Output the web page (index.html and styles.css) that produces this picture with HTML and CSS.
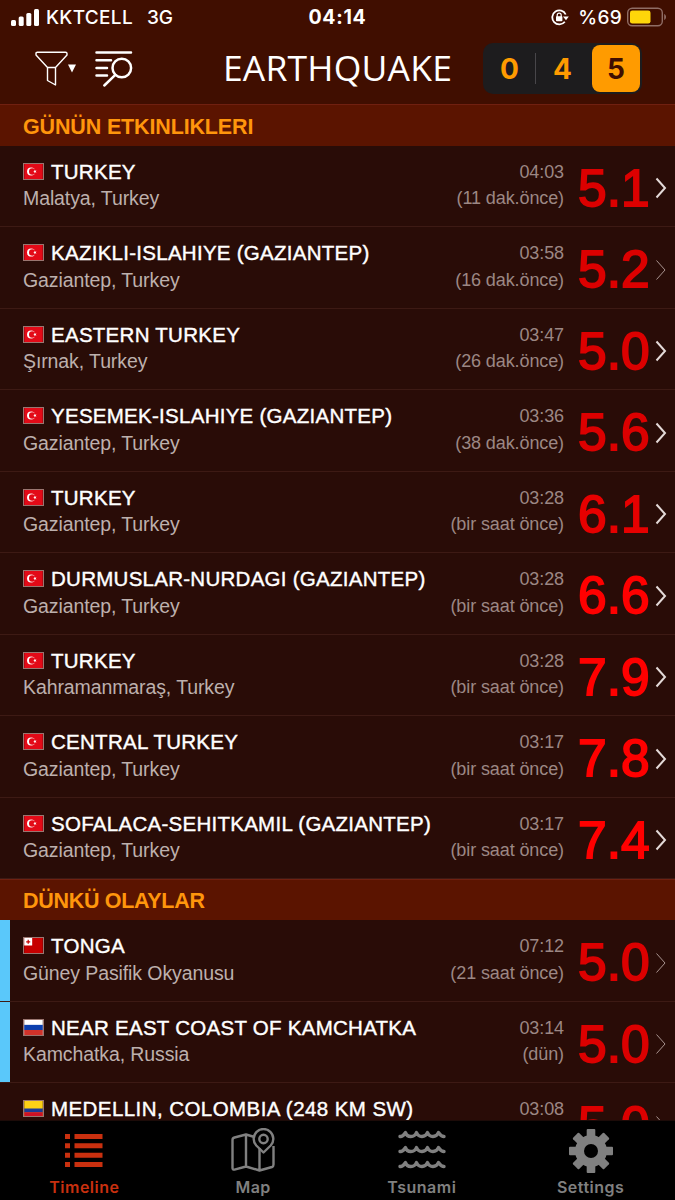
FILE: index.html
```html
<!DOCTYPE html>
<html lang="tr">
<head>
    <meta charset="UTF-8">
    <meta name="viewport" content="width=device-width, initial-scale=1.0">
    <title>Earthquake</title>

    <link rel="stylesheet" href="styles.css">
</head>
<body>

    <!-- Shared icons -->
    <svg class="symbols">
        <symbol id="flag-tr" viewBox="0 0 21 17">
            <rect width="21" height="17" fill="#e30a17"/>
            <circle cx="7.8" cy="8.5" r="4.6" fill="#fff"/>
            <circle cx="9.1" cy="8.5" r="3.7" fill="#e30a17"/>
            <path d="M10.2 8.5l1.3-.6.1-1.4.9 1.1 1.3-.4-.7 1.3.7 1.3-1.3-.4-.9 1.1-.1-1.4z" fill="#fff"/>
        </symbol>
        <symbol id="flag-to" viewBox="0 0 21 17">
            <rect width="21" height="17" fill="#c60000"/>
            <rect width="9" height="8.5" fill="#fff"/>
            <path d="M4.5 2v4.5M2.2 4.3h4.6" stroke="#c60000" stroke-width="1.4"/>
        </symbol>
        <symbol id="flag-ru" viewBox="0 0 21 17">
            <rect width="21" height="17" fill="#fff"/>
            <rect y="5.5" width="21" height="6" fill="#0b3fae"/>
            <rect y="11.3" width="21" height="5.7" fill="#d2322a"/>
        </symbol>
        <symbol id="flag-co" viewBox="0 0 21 17">
            <rect width="21" height="17" fill="#fcd116"/>
            <rect y="8.5" width="21" height="4.5" fill="#1c3a96"/>
            <rect y="12.7" width="21" height="4.3" fill="#ce1126"/>
        </symbol>
        <symbol id="chevron" viewBox="0 0 12 22">
            <path d="M1.5 1.5L10 11L1.5 20.5" fill="none" stroke="currentColor"/>
        </symbol>
        <symbol id="wave" viewBox="0 0 48 12">
            <path d="M2 8.5C5 9 6 6.5 7.5 4.5C9 9.8 16.5 9.8 18.5 4.5C20.5 9.8 27.5 9.8 29.5 4.5C31.5 9.8 38.5 9.8 40.5 4.5C42 6.5 43 8.5 46 8.5"/>
        </symbol>
    </svg>

    <div class="status-bar">
        <div class="carrier">
            <svg class="signal" width="28" height="17" viewBox="0 0 28 17">
                <rect x="0" y="11" width="5" height="6" rx="1.5"/>
                <rect x="7.7" y="7.5" width="5" height="9.5" rx="1.5"/>
                <rect x="15.3" y="4" width="5" height="13" rx="1.5"/>
                <rect x="23" y="0" width="5" height="17" rx="1.5"/>
            </svg>
            <span class="operator">KKTCELL</span>
            <span>3G</span>
        </div>
        <div class="clock">04:14</div>
        <div class="battery">
            <svg width="18" height="17" viewBox="0 0 18 17">
                <path d="M14.7 5.5A7 7 0 1 0 13.8 12.7" fill="none" stroke="#fff" stroke-width="1.8"/>
                <path d="M12 7.5h5.8L15 11.2z" fill="#fff"/>
                <rect x="5" y="7.3" width="6.4" height="5" rx=".8" fill="#fff"/>
                <path d="M6.2 8V6.2a2 2 0 0 1 4 0V8" fill="none" stroke="#fff" stroke-width="1.2"/>
            </svg>
            <span class="percent">%69</span>
            <svg width="40" height="20" viewBox="0 0 40 20">
                <rect x=".7" y="1.2" width="34.6" height="17.6" rx="4.5" fill="none" stroke="#8f6d65" stroke-width="1.4"/>
                <rect x="3" y="3.5" width="20.5" height="13" rx="2.3" fill="#fed60a"/>
                <path d="M37.2 7c2.4 1 2.4 5 0 6z" fill="#8f6d65"/>
            </svg>
        </div>
    </div>

    <div class="nav-bar">
        <div class="tools">
            <svg width="42" height="36" viewBox="0 0 42 36" fill="none" stroke="#fff" stroke-width="1.4" stroke-linejoin="round">
                <path d="M1 2.5Q1 1.3 2.3 1.3H30.5Q32 1.3 32 2.5V4L20.5 16.5H12.5L1 4zM12.5 16.5V29.5L20.5 34V16.5"/>
                <path d="M33 13.5h8L37 21.5z" fill="#fff" stroke="none"/>
            </svg>
            <svg width="38" height="38" viewBox="0 0 38 38" fill="none" stroke="#fff" stroke-width="2.5" stroke-linecap="round">
                <path d="M1.5 2.5H36M1.5 10.3H16M1.5 18H12M1.5 25.5H12"/>
                <circle cx="26.8" cy="18" r="9.3"/>
                <path d="M20.3 24.8L9.3 35.5"/>
            </svg>
        </div>
        <h1>EARTHQUAKE</h1>
        <div class="segments">
            <span>0</span>
            <span>4</span>
            <span class="active">5</span>
        </div>
    </div>

    <div class="list">
        <h2>GÜNÜN ETKINLIKLERI</h2>

        <div class="row">
            <div class="place">
                <div class="name"><svg class="flag"><use href="#flag-tr"/></svg>TURKEY</div>
                <div class="region">Malatya, Turkey</div>
            </div>
            <div class="time">04:03<br>(11 dak.önce)</div>
            <div class="mag">5.1</div>
            <svg class="chevron"><use href="#chevron"/></svg>
        </div>
        <div class="row">
            <div class="place">
                <div class="name"><svg class="flag"><use href="#flag-tr"/></svg>KAZIKLI-ISLAHIYE (GAZIANTEP)</div>
                <div class="region">Gaziantep, Turkey</div>
            </div>
            <div class="time">03:58<br>(16 dak.önce)</div>
            <div class="mag">5.2</div>
            <svg class="chevron thin"><use href="#chevron"/></svg>
        </div>
        <div class="row">
            <div class="place">
                <div class="name"><svg class="flag"><use href="#flag-tr"/></svg>EASTERN TURKEY</div>
                <div class="region">Şırnak, Turkey</div>
            </div>
            <div class="time">03:47<br>(26 dak.önce)</div>
            <div class="mag">5.0</div>
            <svg class="chevron"><use href="#chevron"/></svg>
        </div>
        <div class="row">
            <div class="place">
                <div class="name"><svg class="flag"><use href="#flag-tr"/></svg>YESEMEK-ISLAHIYE (GAZIANTEP)</div>
                <div class="region">Gaziantep, Turkey</div>
            </div>
            <div class="time">03:36<br>(38 dak.önce)</div>
            <div class="mag">5.6</div>
            <svg class="chevron"><use href="#chevron"/></svg>
        </div>
        <div class="row">
            <div class="place">
                <div class="name"><svg class="flag"><use href="#flag-tr"/></svg>TURKEY</div>
                <div class="region">Gaziantep, Turkey</div>
            </div>
            <div class="time">03:28<br>(bir saat önce)</div>
            <div class="mag strong">6.1</div>
            <svg class="chevron"><use href="#chevron"/></svg>
        </div>
        <div class="row">
            <div class="place">
                <div class="name"><svg class="flag"><use href="#flag-tr"/></svg>DURMUSLAR-NURDAGI (GAZIANTEP)</div>
                <div class="region">Gaziantep, Turkey</div>
            </div>
            <div class="time">03:28<br>(bir saat önce)</div>
            <div class="mag major">6.6</div>
            <svg class="chevron"><use href="#chevron"/></svg>
        </div>
        <div class="row">
            <div class="place">
                <div class="name"><svg class="flag"><use href="#flag-tr"/></svg>TURKEY</div>
                <div class="region">Kahramanmaraş, Turkey</div>
            </div>
            <div class="time">03:28<br>(bir saat önce)</div>
            <div class="mag major">7.9</div>
            <svg class="chevron"><use href="#chevron"/></svg>
        </div>
        <div class="row">
            <div class="place">
                <div class="name"><svg class="flag"><use href="#flag-tr"/></svg>CENTRAL TURKEY</div>
                <div class="region">Gaziantep, Turkey</div>
            </div>
            <div class="time">03:17<br>(bir saat önce)</div>
            <div class="mag major">7.8</div>
            <svg class="chevron"><use href="#chevron"/></svg>
        </div>
        <div class="row">
            <div class="place">
                <div class="name"><svg class="flag"><use href="#flag-tr"/></svg>SOFALACA-SEHITKAMIL (GAZIANTEP)</div>
                <div class="region">Gaziantep, Turkey</div>
            </div>
            <div class="time">03:17<br>(bir saat önce)</div>
            <div class="mag major">7.4</div>
            <svg class="chevron"><use href="#chevron"/></svg>
        </div>

        <h2 class="yesterday">DÜNKÜ OLAYLAR</h2>

        <div class="row sea">
            <div class="place">
                <div class="name"><svg class="flag"><use href="#flag-to"/></svg>TONGA</div>
                <div class="region">Güney Pasifik Okyanusu</div>
            </div>
            <div class="time">07:12<br>(21 saat önce)</div>
            <div class="mag">5.0</div>
            <svg class="chevron thin"><use href="#chevron"/></svg>
        </div>
        <div class="row sea">
            <div class="place">
                <div class="name"><svg class="flag"><use href="#flag-ru"/></svg>NEAR EAST COAST OF KAMCHATKA</div>
                <div class="region">Kamchatka, Russia</div>
            </div>
            <div class="time">03:14<br>(dün)</div>
            <div class="mag">5.0</div>
            <svg class="chevron thin"><use href="#chevron"/></svg>
        </div>
        <div class="row">
            <div class="place">
                <div class="name wide"><svg class="flag"><use href="#flag-co"/></svg>MEDELLIN, COLOMBIA (248 KM SW)</div>
            </div>
            <div class="time">03:08</div>
            <div class="mag">5.0</div>
            <svg class="chevron thin"><use href="#chevron"/></svg>
        </div>
    </div>

    <div class="tab-bar">
        <div class="tab active">
            <svg width="46" height="46" viewBox="0 0 46 46" fill="currentColor">
                <path d="M4 6h5v5H4zM13.5 6H41.5v5H13.5zM4 15.3h5v5H4zM13.5 15.3H41.5v5H13.5zM4 24.7h5v5H4zM13.5 24.7H41.5v5H13.5zM4 34h5v5H4zM13.5 34H41.5v5H13.5z"/>
            </svg>
            Timeline
        </div>
        <div class="tab">
            <svg width="46" height="46" viewBox="0 0 46 46" fill="none" stroke="currentColor" stroke-width="2.4" stroke-linejoin="round">
                <path d="M24.5 9L16 6.5L4.5 9.5Q2.5 10 2.5 12V40Q2.5 42 4.5 41.6L16 38.5L29.5 42.5L42 39Q43.5 38.5 43.5 36.5V18M16 6.5V38.5M29.5 20V42.5"/>
                <path d="M33.5 24.5L26.3 17.5A9.8 9.8 0 1 1 40.7 17.5Z"/>
                <circle cx="33.5" cy="11" r="4.2"/>
            </svg>
            Map
        </div>
        <div class="tab">
            <svg width="48" height="46" viewBox="0 0 48 46" fill="none" stroke="currentColor" stroke-width="3.4" stroke-linejoin="round" stroke-linecap="round">
                <use href="#wave" width="48" height="12"/>
                <use href="#wave" y="15" width="48" height="12"/>
                <use href="#wave" y="30" width="48" height="12"/>
            </svg>
            Tsunami
        </div>
        <div class="tab">
            <svg width="46" height="46" viewBox="-23 -23 46 46" fill="currentColor">
                <g id="teeth">
                    <rect x="-4.3" y="-22" width="8.6" height="44" rx="1"/>
                    <rect x="-22" y="-4.3" width="44" height="8.6" rx="1"/>
                </g>
                <use href="#teeth" transform="rotate(45)"/>
                <circle r="16"/>
                <circle r="7" fill="#000"/>
            </svg>
            Settings
        </div>
    </div>

</body>
</html>
```
FILE: styles.css
```css
* {
    box-sizing: border-box;
}

body {
    margin: 0;
    height: 1200px;
    display: flex;
    flex-direction: column;
    overflow: hidden;
    background-color: #400e00;
    color: #fff;
    font-family: "Liberation Sans", Arial, sans-serif;
}

.symbols {
    display: none;
}

/* Status bar */
.status-bar {
    height: 34px;
    flex: none;
    display: grid;
    grid-template-columns: 1fr auto 1fr;
    align-items: center;
    padding: 0 8px 0 11px;
    font-family: Inter, sans-serif;
    font-size: 19px;
    font-weight: 500;
}

.carrier,
.battery {
    display: flex;
    align-items: center;
}

.signal {
    fill: #fff;
    margin-right: 7px;
}

.operator {
    margin-right: 14px;
    letter-spacing: 0.3px;
}

.clock {
    margin-right: 3px;
    font-size: 19.5px;
    font-weight: 700;
    letter-spacing: 0.7px;
}

.battery {
    justify-content: flex-end;
}

.percent {
    margin: 0 5px 0 9px;
    letter-spacing: 0.3px;
}

/* Navigation bar */
.nav-bar {
    height: 70px;
    flex: none;
    display: grid;
    grid-template-columns: 1fr auto 1fr;
    align-items: center;
    padding: 0 33px 0 35px;
}

.tools {
    display: flex;
    align-items: center;
    gap: 18px;
}

h1 {
    margin: 0 2px 4px 0;
    font-family: "Open Sans", sans-serif;
    font-size: 35.5px;
    font-weight: 400;
    line-height: 66px;
    letter-spacing: 0.2px;
}

.segments {
    justify-self: end;
    display: flex;
    width: 159px;
    height: 51px;
    margin-bottom: 1px;
    padding: 2px 0;
    border-radius: 10px;
    background-color: #1d1c1e;
    color: #ff9b00;
    font-family: Inter, sans-serif;
    font-size: 28px;
    font-weight: 700;
    line-height: 48px;
    text-align: center;
}

.segments span {
    flex: 1;
}

.segments span:first-child {
    background: linear-gradient(#48464a, #48464a) right center / 1px 31px no-repeat;
}

.segments .active {
    flex: none;
    width: 48px;
    margin: 0 2px 0 3px;
    border-radius: 8px;
    background-color: #ff9b00;
    color: #400e00;
}

/* Earthquake list */
.list {
    flex: 1;
    min-height: 0;
    overflow: hidden;
    background-color: #290c07;
}

h2 {
    margin: 0;
    height: 41.6px;
    padding-left: 23px;
    border-top: 1px solid #702010;
    background-color: #5b1400;
    color: #ff960c;
    font-size: 21.5px;
    font-weight: 700;
    letter-spacing: -0.15px;
    line-height: 44px;
}

h2.yesterday {
    height: 41px;
    letter-spacing: -0.3px;
    line-height: 43px;
}

.row {
    display: flex;
    height: 81.5px;
    padding: 0 8px 0 23px;
    border-bottom: 1px solid #3d1a14;
}

.row.sea {
    box-shadow: inset 10px 0 #5ac8fa;
}

.place {
    flex: 1;
    white-space: nowrap;
}

.name {
    display: flex;
    align-items: center;
    gap: 7px;
    height: 27px;
    margin-top: 12.9px;
    font-size: 20.5px;
    letter-spacing: 0.27px;
    -webkit-text-stroke: 0.4px #fff;
}

.name.wide {
    letter-spacing: 0.43px;
}

.flag {
    width: 21px;
    height: 17px;
    margin-top: -1px;
    border: 1px solid #9a7670;
}

.region {
    color: #bdb0ad;
    font-size: 19.5px;
    letter-spacing: -0.1px;
    line-height: 27px;
}

.time {
    margin-top: 13.3px;
    color: #9c8784;
    font-size: 18px;
    letter-spacing: -0.1px;
    line-height: 26.5px;
    text-align: right;
}

.mag {
    width: 72px;
    margin-left: 14px;
    color: #dc0000;
    font-size: 51.5px;
    line-height: 84px;
    -webkit-text-stroke: 1.8px currentColor;
}

.mag.strong {
    color: #e60000;
}

.mag.major {
    color: #ff0000;
}

.chevron {
    width: 12px;
    height: 22px;
    margin: 31.5px 0 0 5px;
    color: #e4dad8;
    stroke-width: 2;
}

.chevron.thin {
    color: #a8938f;
    stroke-width: 1;
}

/* Bottom tabs */
.tab-bar {
    display: flex;
    flex: none;
    height: 80px;
    border-top: 1px solid #1c0b08;
    background-color: #000;
}

.tab {
    flex: 1;
    display: flex;
    flex-direction: column;
    align-items: center;
    padding-top: 7px;
    color: #808080;
    font-family: Inter, sans-serif;
    font-size: 16px;
    font-weight: 600;
    letter-spacing: 0.5px;
    line-height: 27px;
}

.tab svg {
    flex: none;
}

.tab.active {
    color: #c9300f;
}
```
